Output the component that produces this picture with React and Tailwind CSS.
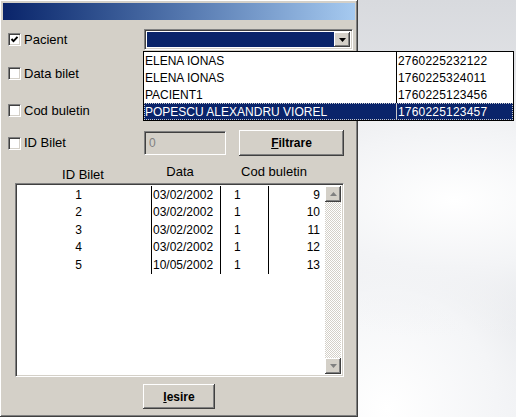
import React from "react";

const raised =
  "shadow-[inset_-1px_-1px_#404040,inset_1px_1px_#ffffff,inset_-2px_-2px_#808080,inset_2px_2px_#d4d0c8]";
const sunken =
  "border border-t-[#808080] border-l-[#808080] border-r-white border-b-white shadow-[inset_1px_1px_#404040,inset_-1px_-1px_#d4d0c8]";

const rows = [
  { id: 1, data: "03/02/2002", cod: 1, nr: 9 },
  { id: 2, data: "03/02/2002", cod: 1, nr: 10 },
  { id: 3, data: "03/02/2002", cod: 1, nr: 11 },
  { id: 4, data: "03/02/2002", cod: 1, nr: 12 },
  { id: 5, data: "10/05/2002", cod: 1, nr: 13 },
];

const pacienti = [
  { nume: "ELENA IONAS", cnp: "2760225232122" },
  { nume: "ELENA IONAS", cnp: "1760225324011" },
  { nume: "PACIENT1", cnp: "1760225123456" },
  { nume: "POPESCU ALEXANDRU VIOREL", cnp: "1760225123457", sel: true },
];

function Check({ checked }) {
  return (
    <span className={"w-[13px] h-[13px] shrink-0 bg-white flex items-center justify-center " + sunken}>
      {checked && (
        <svg width="9" height="9" viewBox="0 0 9 9">
          <path d="M1.5 4 L3.5 6.2 L7.5 1.8" stroke="#000" strokeWidth="1.9" fill="none" />
        </svg>
      )}
    </span>
  );
}

function Arrow({ dir, color }) {
  return (
    <svg width="7" height="4" viewBox="0 0 7 4">
      {dir === "down" ? (
        <path d="M0 0 H7 L3.5 4 Z" fill={color} />
      ) : (
        <path d="M0 4 H7 L3.5 0 Z" fill={color} />
      )}
    </svg>
  );
}

export default function App() {
  return (
    <div className="relative w-[516px] h-[417px] flex overflow-hidden text-black font-['Liberation_Sans',Arial,sans-serif] bg-[image:radial-gradient(ellipse_at_88%_48%,#ffffff_0%,#f3f4f6_22%,transparent_45%),radial-gradient(ellipse_at_75%_98%,#ffffff_0%,#f4f5f7_20%,transparent_45%),linear-gradient(180deg,#d8dade_0%,#e6e7ea_30%,#cfd2d8_68%,#e9eaed_100%)]">
      {/* fereastra */}
      <div className={"w-[358px] h-[417px] bg-[#d4d0c8] p-[3px] flex flex-col " + raised}>
        <div className="h-[17px] bg-gradient-to-r from-[#0a246a] to-[#a6caf0]" />

        {/* Pacient */}
        <div className="mt-[9px] h-[21px] flex items-center">
          <label className="w-[141px] flex items-center gap-[3px] pl-[5px] text-[13px]">
            <Check checked />
            <span>Pacient</span>
          </label>
          <div className={"w-[209px] h-[21px] bg-white p-[2px] flex " + sunken}>
            <div className="flex-1 bg-[#0a246a]" />
            <div className={"w-[16px] bg-[#d4d0c8] flex items-center justify-center " + raised}>
              <Arrow dir="down" color="#000" />
            </div>
          </div>
        </div>

        {/* Data bilet */}
        <div className="mt-[13px] h-[21px] flex items-center">
          <label className="flex items-center gap-[3px] pl-[5px] text-[13px]">
            <Check />
            <span>Data bilet</span>
          </label>
        </div>

        {/* Cod buletin */}
        <div className="mt-[16px] h-[21px] flex items-center">
          <label className="flex items-center gap-[3px] pl-[5px] text-[13px]">
            <Check />
            <span>Cod buletin</span>
          </label>
        </div>

        {/* ID Bilet */}
        <div className="mt-[9px] h-[26px] flex items-center">
          <label className="w-[141px] flex items-center gap-[3px] pl-[5px] text-[13px]">
            <Check />
            <span>ID Bilet</span>
          </label>
          <div className={"w-[82px] h-[24px] bg-[#d4d0c8] flex items-center pl-[4px] text-[12px] text-[#808080] " + sunken}>
            0
          </div>
          <button className={"ml-[13px] w-[105px] h-[26px] bg-[#d4d0c8] text-[12px] font-bold " + raised}>
            <span className="underline">F</span>iltrare
          </button>
        </div>

        {/* cap de tabel */}
        <div className="h-[27px] flex ml-[12px] text-[13px]">
          <div className="w-[136px] text-center pt-[9px]">ID Bilet</div>
          <div className="w-[58px] text-center pt-[6px]">Data</div>
          <div className="w-[130px] text-center pt-[6px]">Cod buletin</div>
        </div>

        {/* grila */}
        <div className={"ml-[12px] w-[329px] h-[194px] bg-white flex p-[2px] " + sunken}>
          <div className="flex-1 flex flex-col text-[12px]">
            {rows.map((r) => (
              <div key={r.id} className="h-[17.5px] flex items-center">
                <div className="w-[134px] h-full flex items-center justify-center pr-[12px] border-r border-black">{r.id}</div>
                <div className="w-[69px] h-full flex items-center pl-[1px] border-r border-black">{r.data}</div>
                <div className="w-[48px] h-full flex items-center pl-[13px] border-r border-black">{r.cod}</div>
                <div className="flex-1 h-full flex items-center justify-end pr-[5px]">{r.nr}</div>
              </div>
            ))}
          </div>
          <div className="w-[16px] flex flex-col bg-[image:repeating-conic-gradient(#d4d0c8_0_25%,#ffffff_0_50%)] bg-[length:2px_2px]">
            <div className={"h-[16px] bg-[#d4d0c8] flex items-center justify-center " + raised}>
              <Arrow dir="up" color="#808080" />
            </div>
            <div className="flex-1" />
            <div className={"h-[16px] bg-[#d4d0c8] flex items-center justify-center " + raised}>
              <Arrow dir="down" color="#808080" />
            </div>
          </div>
        </div>

        <button className={"mt-[7px] self-center w-[72px] h-[25px] bg-[#d4d0c8] text-[12px] font-bold " + raised}>
          <span className="underline">I</span>esire
        </button>
      </div>

      {/* lista derulanta */}
      <div className="absolute left-[143px] top-[51px] w-[371px] h-[70px] bg-white border border-black text-[12px]">
        {pacienti.map((p, i) => (
          <div
            key={i}
            className={
              "h-[17px] flex " +
              (p.sel ? "bg-[#0a246a] text-white outline-1 outline-dotted outline-[#c8c8c8] -outline-offset-1" : "")
            }
          >
            <div className={"w-[253px] flex items-center pl-[1px] border-r " + (p.sel ? "border-[#c8c8c8]" : "border-black")}>
              {p.nume}
            </div>
            <div className="flex-1 flex items-center pl-[1px] tracking-[0.2px]">{p.cnp}</div>
          </div>
        ))}
      </div>
    </div>
  );
}
